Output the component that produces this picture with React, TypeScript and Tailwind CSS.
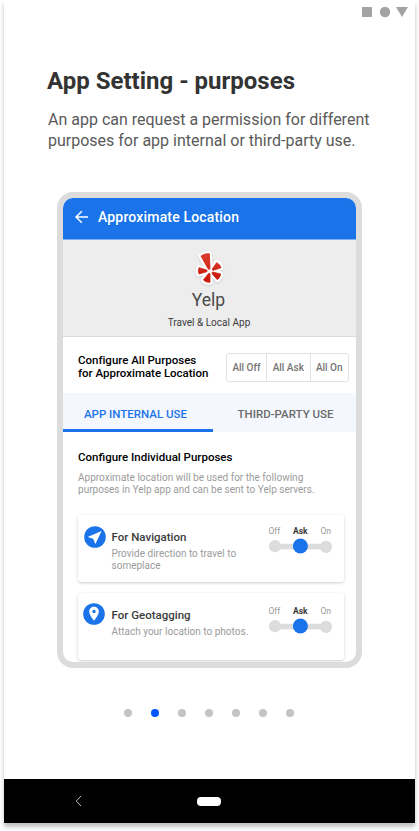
import React from "react";

const PETALS =
  "M45 33 Q56 25 70 26 L72 70 Q70 76 66 71 Z M79 72 L92 53 Q102 57 105 68 L82 76 Q78 76 79 72 Z M80 81 L104 87 Q103 98 94 104 L79 87 Q77 82 80 81 Z M72 87 L72 112 Q60 113 52 105 L67 86 Q72 83 72 87 Z M62 80 L39 87 Q35 77 39 68 L62 75 Q66 78 62 80 Z";

function YelpLogo() {
  return (
    <svg className="ml-[1px] h-[38px] w-[32px] drop-shadow-[0_1px_1px_rgba(0,0,0,0.12)]" viewBox="24 12 96 114">
      <defs>
        <linearGradient id="petal" x1="0" y1="0" x2="0" y2="1">
          <stop offset="0" stopColor="#d8402f" />
          <stop offset="1" stopColor="#c91407" />
        </linearGradient>
      </defs>
      <path d={PETALS} fill="#fff" stroke="#fff" strokeWidth="15" strokeLinejoin="round" />
      <path d={PETALS} fill="url(#petal)" stroke="#cf2415" strokeWidth="2.5" strokeLinejoin="round" />
    </svg>
  );
}

function NavigationIcon() {
  return (
    <svg className="size-[22px] shrink-0" viewBox="0 0 22 22">
      <circle cx="11" cy="11" r="10.8" fill="#1a73e8" />
      <path d="M17.6 5 L3.6 11 L9.1 12.8 L11.4 18 Z" fill="#fff" />
    </svg>
  );
}

function PinIcon() {
  return (
    <svg className="size-[22px] shrink-0" viewBox="0 0 22 22">
      <circle cx="11" cy="11" r="10.8" fill="#1a73e8" />
      <path
        fillRule="evenodd"
        d="M11 3.8 C8.2 3.8 6.2 5.9 6.2 8.5 C6.2 12 11 17.8 11 17.8 C11 17.8 15.8 12 15.8 8.5 C15.8 5.9 13.8 3.8 11 3.8 Z M11 6.8 A1.7 1.7 0 1 1 11 10.2 A1.7 1.7 0 1 1 11 6.8 Z"
        fill="#fff"
      />
    </svg>
  );
}

function PermissionSlider() {
  return (
    <div className="w-[64px] shrink-0">
      <div className="flex justify-between pr-[1.5px] text-[8.5px] leading-[10px] text-[#9b9b9b]">
        <span>Off</span>
        <span className="font-bold text-[#3c3c3c]">Ask</span>
        <span>On</span>
      </div>
      <svg className="mt-[2px] block h-[17px] w-[64px]" viewBox="0 0 64 17">
        <rect x="6" y="5.8" width="52" height="5.6" fill="#dcdcdc" />
        <circle cx="6" cy="8.2" r="6.1" fill="#dcdcdc" />
        <circle cx="57" cy="8.9" r="6.1" fill="#dcdcdc" />
        <circle cx="31.4" cy="8" r="7.5" fill="#1a73e8" />
      </svg>
    </div>
  );
}

function Card({ icon, title, children, second }: { icon: React.ReactNode; title: string; children: React.ReactNode; second?: boolean }) {
  return (
    <div className="flex h-[67px] w-[265.5px] rounded-[3px] bg-white shadow-[0_1px_3px_rgba(0,0,0,0.2)]">
      <div className={second ? "ml-[5px] mt-[10px]" : "ml-[6px] mt-[11px]"}>{icon}</div>
      <div className={second ? "ml-[6.5px] w-[157px] pt-[15px]" : "ml-[5.5px] w-[157px] pt-[15px]"}>
        <div className="whitespace-nowrap text-[11.5px] font-medium leading-[14px] text-[#3c3c3c]">{title}</div>
        <div className="mt-[4px] whitespace-nowrap text-[10px] leading-[11.5px] tracking-[0.01px] text-[#9b9b9b]">{children}</div>
      </div>
      <div className={second ? "pt-[13px]" : "pt-[11px]"}>
        <PermissionSlider />
      </div>
    </div>
  );
}

function PhonePreview() {
  return (
    <div className="ml-[53px] mt-[41px] h-[476px] w-[305px] overflow-hidden rounded-[16px] border-[6px] border-[#dcdcdc] bg-white">
      <div className="flex h-[42px] items-center border-b border-[#7fb0f0] bg-[#1a73e8] pb-[3px] text-white">
        <svg className="ml-[12px] h-[14px] w-[14px]" viewBox="0 0 14 14" fill="none" stroke="#fff" strokeWidth="1.5">
          <path d="M13 7 H1.2 M6.8 1.2 L1 7 L6.8 12.8" />
        </svg>
        <span className="ml-[9px] whitespace-nowrap text-[14px] font-medium tracking-[0.17px]">Approximate Location</span>
      </div>
      <div className="flex h-[97px] flex-col items-center border-b border-[#dcdcdc] bg-[#ededed] pr-[1px] pt-[9px]">
        <YelpLogo />
        <div className="mr-[1px] mt-[3px] text-[17.5px] leading-[20px] text-[#4a4a4a]">Yelp</div>
        <div className="mt-[7px] text-[10px] leading-[12px] tracking-[0.02px] text-[#3c3c3c]">Travel &amp; Local App</div>
      </div>
      <div className="flex h-[56px] items-center justify-between pl-[15px] pr-[7px] pt-[5px]">
        <div className="whitespace-nowrap pb-px text-[11.5px] font-medium leading-[13px] tracking-[-0.01px] text-black">
          Configure All Purposes
          <br />
          for Approximate Location
        </div>
        <div className="flex h-[29px] w-[123px] divide-x divide-[#e2e2e2] rounded-[3px] border border-[#e2e2e2] text-center text-[10px] font-medium leading-[28px] text-[#757575]">
          <span className="w-[40px]">All Off</span>
          <span className="w-[43.5px]">All Ask</span>
          <span className="flex-1">All On</span>
        </div>
      </div>
      <div className="flex h-[39px] bg-[#f4f8fe] text-center text-[11.5px] font-medium leading-[42px]">
        <div className="h-[38.5px] w-[150px] border-b-[3px] border-[#1a73e8] pr-[5px] text-[#1a73e8]">APP INTERNAL USE</div>
        <div className="flex-1 pl-[2px] text-[#6b6b6b]">THIRD-PARTY USE</div>
      </div>
      <div className="pl-[15px] pt-[18px]">
        <div className="text-[11.5px] font-medium leading-[14px] text-black">Configure Individual Purposes</div>
        <div className="mt-[8px] whitespace-nowrap text-[10px] leading-[11.5px] tracking-[0.01px] text-[#9b9b9b]">
          Approximate location will be used for the following
          <br />
          purposes in Yelp app and can be sent to Yelp servers.
        </div>
        <div className="mt-[20px] flex flex-col gap-[11px]">
          <Card icon={<NavigationIcon />} title="For Navigation">
            Provide direction to travel to
            <br />
            someplace
          </Card>
          <Card icon={<PinIcon />} title="For Geotagging" second>
            Attach your location to photos.
          </Card>
        </div>
      </div>
    </div>
  );
}

export default function App() {
  return (
    <div className="h-[831px] w-[419px] overflow-hidden bg-white px-[4px] font-['Roboto',sans-serif]">
      <div className="flex h-[823px] w-[411px] flex-col bg-white shadow-[0_4px_4px_rgba(0,0,0,0.25)]">
        <svg className="ml-[357px] mt-[6px] h-[12px] w-[48px] shrink-0" viewBox="0 0 48 12" fill="#a3a3a3">
          <rect x="1" y="1" width="10" height="10" />
          <circle cx="24" cy="6" r="5.2" />
          <path d="M35 1 H47 L41 11 Z" />
        </svg>
        <h1 className="ml-[43px] mt-[49px] whitespace-nowrap text-[24px] font-bold leading-[28px] text-[#333]">App Setting - purposes</h1>
        <p className="ml-[44px] mt-[14px] whitespace-nowrap text-[16px] leading-[21px] text-[#5a5a5a]">
          An app can request a permission for different
          <br />
          purposes for app internal or third-party use.
        </p>
        <PhonePreview />
        <div className="ml-[120px] mt-[41px] flex gap-[19px]">
          {[0, 1, 2, 3, 4, 5, 6].map((i) => (
            <span key={i} className={i === 1 ? "size-[8px] rounded-full bg-[#0057ff]" : "size-[8px] rounded-full bg-[#c4c4c4]"} />
          ))}
        </div>
        <div className="mt-auto flex h-[44px] items-center bg-black">
          <svg className="ml-[71px] h-[12px] w-[8px]" viewBox="0 0 8 12" fill="none" stroke="#d0d0d0" strokeWidth="0.9">
            <path d="M6 1 L1.3 6 L6 11" />
          </svg>
          <span className="ml-[114px] mt-px h-[9px] w-[24px] rounded-[4px] bg-white" />
        </div>
      </div>
    </div>
  );
}
